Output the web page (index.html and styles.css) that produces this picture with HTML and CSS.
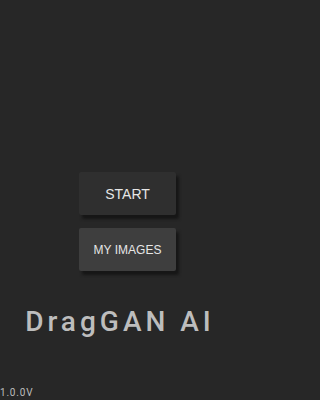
FILE: index.html
```html
<!DOCTYPE html>
<html>
<head>
<meta charset="utf-8">
<link rel="stylesheet" href="styles.css">
</head>
<body>
<div class="screen">
  <div class="actions">
    <button class="btn btn-start">START</button>
    <button class="btn btn-images">MY IMAGES</button>
  </div>
  <h1 class="title">DragGAN AI</h1>
  <div class="version">1.0.0V</div>
</div>
</body>
</html>
```
FILE: styles.css
```css
html, body {
  margin: 0;
  padding: 0;
  background: #272727;
}
.screen {
  width: 240px;
  height: 400px;
  display: flex;
  flex-direction: column;
  font-family: Roboto, "Liberation Sans", sans-serif;
  box-sizing: border-box;
  padding-top: 172px;
}
.actions {
  display: flex;
  flex-direction: column;
  gap: 13px;
  padding-left: 79px;
}
.btn {
  width: 97px;
  height: 43px;
  border: none;
  border-radius: 2px;
  color: #e6e6e6;
  font-family: "Liberation Sans", Arial, sans-serif;
  font-size: 14px;
  padding: 0;
  box-shadow: 3px 4px 3px #161616;
}
.btn-start {
  background: #2f2f2f;
}
.btn-images {
  background: #3e3e3e;
  font-size: 12px;
}
.title {
  margin: 34px 0 0 0;
  text-align: center;
  font-size: 28px;
  font-weight: 500;
  letter-spacing: 4px;
  color: #bdbdbd;
  line-height: 33px;
}
.version {
  margin-top: auto;
  font-size: 10px;
  letter-spacing: 0.8px;
  color: #bdbdbd;
  line-height: 12px;
  padding-bottom: 1px;
}
```
